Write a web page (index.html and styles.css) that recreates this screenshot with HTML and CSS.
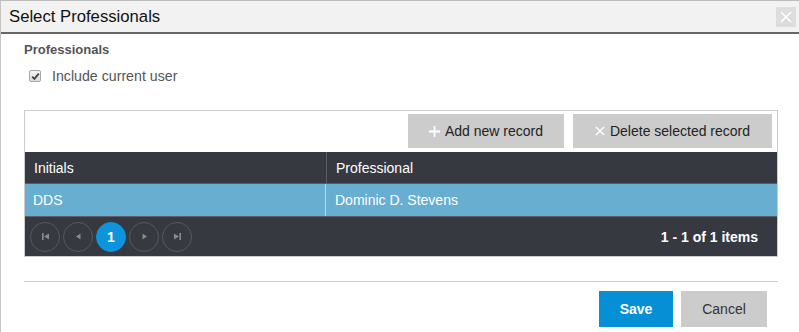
FILE: index.html
```html
<!DOCTYPE html>
<html lang="en">
<head>
  <meta charset="UTF-8">
  <title>Select Professionals</title>
  <link rel="stylesheet" href="styles.css">
</head>
<body>
  <div class="window">
    <div class="titlebar">
      <span class="title">Select Professionals</span>
      <span class="close">
        <svg width="12" height="12" viewBox="0 0 12 12"><path d="M1 1L11 11M11 1L1 11" stroke="#fff" stroke-width="1.6"/></svg>
      </span>
    </div>

    <div class="content">
      <div class="section-label">Professionals</div>
      <label class="check-row">
        <span class="checkbox">
          <svg width="9" height="9" viewBox="0 0 9 9"><path d="M1.2 4.6L3.4 6.8L7.8 1.6" fill="none" stroke="#444" stroke-width="1.8"/></svg>
        </span>
        Include current user
      </label>

      <div class="grid">
        <div class="toolbar">
          <button class="tool-btn">
            <svg class="tool-icon" width="11" height="11" viewBox="0 0 11 11"><path d="M5.5 0V11M0 5.5H11" stroke="#fff" stroke-width="1.8"/></svg>
            Add new record
          </button>
          <button class="tool-btn">
            <svg class="tool-icon" width="10" height="10" viewBox="0 0 10 10"><path d="M1 1L9 9M9 1L1 9" stroke="#fff" stroke-width="1.4"/></svg>
            Delete selected record
          </button>
        </div>
        <div class="grid-row grid-head">
          <div class="cell col-initials">Initials</div>
          <div class="cell">Professional</div>
        </div>
        <div class="grid-row grid-selected">
          <div class="cell col-initials">DDS</div>
          <div class="cell">Dominic D. Stevens</div>
        </div>
        <div class="pager">
          <div class="pages">
            <span class="page-btn">
              <svg width="9" height="9" viewBox="0 0 9 9"><rect x="1" y="1" width="1.6" height="7" fill="#8a8a8a"/><path d="M8 1.5V7.5L3 4.5Z" fill="#8a8a8a"/></svg>
            </span>
            <span class="page-btn">
              <svg width="9" height="9" viewBox="0 0 9 9"><path d="M6.5 1.5V7.5L2 4.5Z" fill="#8a8a8a"/></svg>
            </span>
            <span class="page-btn active">1</span>
            <span class="page-btn">
              <svg width="9" height="9" viewBox="0 0 9 9"><path d="M2.5 1.5V7.5L7 4.5Z" fill="#8a8a8a"/></svg>
            </span>
            <span class="page-btn">
              <svg width="9" height="9" viewBox="0 0 9 9"><path d="M1 1.5V7.5L6 4.5Z" fill="#8a8a8a"/><rect x="6.4" y="1" width="1.6" height="7" fill="#8a8a8a"/></svg>
            </span>
          </div>
          <div class="pager-info">1 - 1 of 1 items</div>
        </div>
      </div>

      <div class="footer">
        <button class="btn btn-save">Save</button>
        <button class="btn btn-cancel">Cancel</button>
      </div>
    </div>
  </div>
</body>
</html>
```

FILE: styles.css
```css
body {
  margin: 0;
  font-family: "Liberation Sans", Arial, sans-serif;
  background-color: #fff;
  overflow: hidden;
}

.window {
  border-top: 1px solid #bbb;
  border-left: 1px solid #c4c4c4;
  height: 100vh;
  box-sizing: border-box;
  overflow: hidden;
}

.titlebar {
  height: 31px;
  background-color: #f2f2f2;
  border-bottom: 2px solid #666;
  display: flex;
  align-items: center;
  justify-content: space-between;
  padding: 0 3px 0 8px;
}

.title {
  font-size: 16.7px;
  color: #111;
}

.close {
  width: 20px;
  height: 20px;
  background-color: #ddd;
  display: flex;
  align-items: center;
  justify-content: center;
}

.content {
  padding: 8px 21px 0 23px;
}

.section-label {
  font-size: 13px;
  font-weight: bold;
  color: #555;
  line-height: 16px;
}

.check-row {
  display: flex;
  align-items: center;
  margin: 9px 0 0 5px;
  font-size: 14.2px;
  color: #555;
  line-height: 18px;
}

.checkbox {
  width: 10px;
  height: 10px;
  border: 1px solid #a8a8a8;
  border-radius: 2px;
  background: linear-gradient(#f4f4f4, #dcdcdc);
  display: flex;
  align-items: center;
  justify-content: center;
  margin-right: 11px;
}

.grid {
  margin-top: 25px;
  border: 1px solid #ccc;
}

.toolbar {
  display: flex;
  justify-content: flex-end;
  gap: 9px;
  padding: 3px 5px 4px;
  background-color: #fff;
}

.tool-btn {
  height: 34px;
  border: none;
  background-color: #ccc;
  font-family: inherit;
  font-size: 14px;
  color: #222;
  padding: 0;
  display: flex;
  align-items: center;
  justify-content: center;
}

.tool-btn:first-child {
  width: 156px;
}

.tool-btn:last-child {
  width: 199px;
}

.tool-icon {
  margin-right: 5px;
}

.grid-row {
  display: flex;
  font-size: 14px;
  color: #fff;
}

.grid-head {
  height: 31px;
  background-color: #363940;
  border-bottom: 1px solid #5a5d63;
}

.grid-selected {
  height: 32px;
  background-color: #67aed1;
  border-bottom: 1px solid #5c6066;
}

.cell {
  display: flex;
  align-items: center;
  padding-left: 9px;
  flex: 1;
}

.col-initials {
  flex: 0 0 292px;
  border-right: 1px solid #9fa3a8;
  padding-left: 8px;
}

.grid-head .col-initials {
  padding-left: 9px;
  border-right-color: #5a5d63;
}

.grid-selected .col-initials {
  border-right-color: #c3d6e0;
}

.pager {
  height: 39px;
  background-color: #363940;
  display: flex;
  align-items: center;
  justify-content: space-between;
  padding: 0 19px 0 5px;
}

.pages {
  display: flex;
  gap: 3px;
}

.page-btn {
  width: 28px;
  height: 28px;
  border: 1px solid #55585e;
  border-radius: 50%;
  display: flex;
  align-items: center;
  justify-content: center;
  font-size: 14px;
  color: #fff;
}

.page-btn.active {
  background-color: #0e94dc;
  border-color: #0e94dc;
  font-weight: bold;
}

.pager-info {
  font-size: 14px;
  font-weight: bold;
  color: #fff;
}

.footer {
  margin-top: 24px;
  border-top: 1px solid #ccc;
  display: flex;
  justify-content: flex-end;
  gap: 8px;
  padding: 9px 11px 0 0;
}

.btn {
  height: 36px;
  border: none;
  font-family: inherit;
  font-size: 14px;
}

.btn-save {
  width: 74px;
  background-color: #0590d6;
  color: #fff;
  font-weight: bold;
}

.btn-cancel {
  width: 86px;
  background-color: #ccc;
  color: #333;
}
```
